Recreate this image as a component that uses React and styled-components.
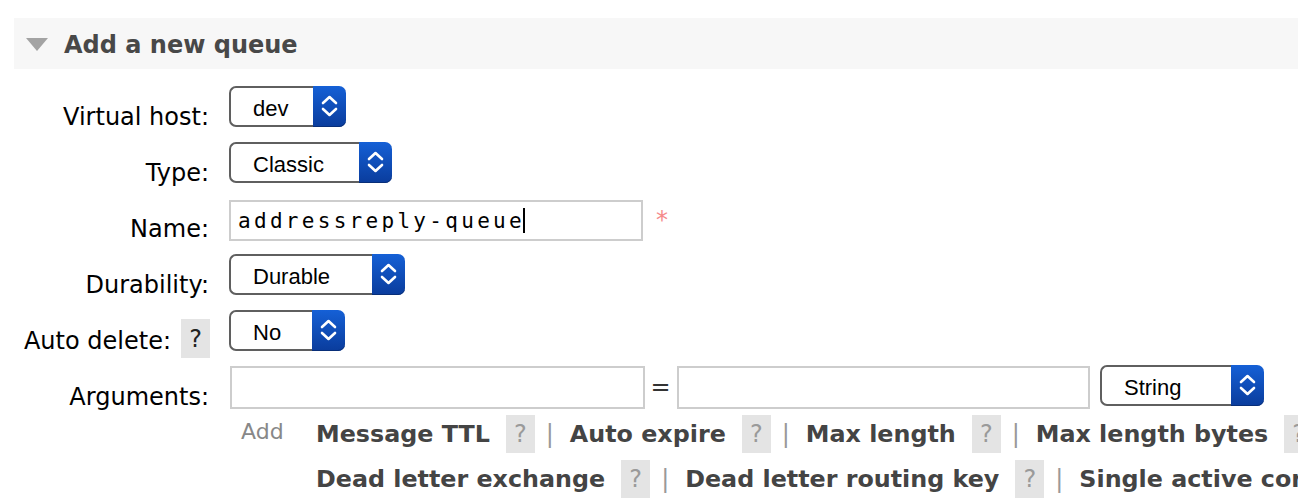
import React from "react";
import styled, { createGlobalStyle } from "styled-components";

const GlobalStyle = createGlobalStyle`
  html, body {
    margin: 0;
    padding: 0;
    background: #fff;
    overflow: hidden;
  }
  body {
    font-family: "DejaVu Sans", Verdana, sans-serif;
    color: #000;
  }
`;

const selects = {
  vhost: { value: "dev", width: 117 },
  type: { value: "Classic", width: 163 },
  durability: { value: "Durable", width: 176 },
  autoDelete: { value: "No", width: 116 },
  argType: { value: "String", width: 164 },
};

const helpLines = [
  ["Message TTL", "Auto expire", "Max length", "Max length bytes"],
  ["Dead letter exchange", "Dead letter routing key", "Single active consumer"],
];

const Chevrons = () => (
  <svg width="33" height="41" viewBox="0 0 33 41">
    <path
      d="M10 17 L16.5 11 L23 17 M10 23 L16.5 29 L23 23"
      fill="none"
      stroke="#fff"
      strokeWidth="2.6"
      strokeLinecap="round"
      strokeLinejoin="round"
    />
  </svg>
);

const SelectBox = ({ value, width }) => (
  <Select $width={width}>
    <SelectValue>{value}</SelectValue>
    <SelectArrows>
      <Chevrons />
    </SelectArrows>
  </Select>
);

const App = () => {
  return (
    <>
      <GlobalStyle />
      <Page>
        <SectionHeader>
          <Toggle />
          <Title>Add a new queue</Title>
        </SectionHeader>

        <Form>
          <Row>
            <Label>
              <LabelText>Virtual host:</LabelText>
            </Label>
            <Controls>
              <SelectBox {...selects.vhost} />
            </Controls>
          </Row>

          <Row>
            <Label>
              <LabelText>Type:</LabelText>
            </Label>
            <Controls>
              <SelectBox {...selects.type} />
            </Controls>
          </Row>

          <Row>
            <Label>
              <LabelText>Name:</LabelText>
            </Label>
            <Controls>
              <TextField $width={414}>
                addressreply-queue
                <Caret />
              </TextField>
              <Required>*</Required>
            </Controls>
          </Row>

          <Row>
            <Label>
              <LabelText>Durability:</LabelText>
            </Label>
            <Controls>
              <SelectBox {...selects.durability} />
            </Controls>
          </Row>

          <Row>
            <Label>
              <LabelText>Auto delete:</LabelText>
              <LabelHelp>?</LabelHelp>
            </Label>
            <Controls>
              <SelectBox {...selects.autoDelete} />
            </Controls>
          </Row>

          <Row $compact>
            <Label>
              <LabelText>Arguments:</LabelText>
            </Label>
            <Controls>
              <ArgField $width={415} />
              <Equals>=</Equals>
              <ArgField $width={413} />
              <ArgType>
                <SelectBox {...selects.argType} />
              </ArgType>
            </Controls>
          </Row>

          <HelpArea>
            <AddLink>Add</AddLink>
            <HelpLines>
              {helpLines.map((line, i) => (
                <HelpLine key={i}>
                  {line.map((name, j) => (
                    <React.Fragment key={name}>
                      <ArgLink>{name}</ArgLink>
                      <HelpBox>?</HelpBox>
                      {j < line.length - 1 || i === 0 ? <Pipe>|</Pipe> : null}
                    </React.Fragment>
                  ))}
                </HelpLine>
              ))}
            </HelpLines>
          </HelpArea>
        </Form>
      </Page>
    </>
  );
};

// Styled Components
const Page = styled.div`
  padding: 18px 0 0 14px;
  width: 1284px;
`;

const SectionHeader = styled.div`
  height: 51px;
  background: #f7f7f7;
  display: flex;
  align-items: center;
  padding-left: 12px;
  gap: 16px;
`;

const Toggle = styled.span`
  width: 0;
  height: 0;
  border-left: 11px solid transparent;
  border-right: 11px solid transparent;
  border-top: 13px solid #a3a3a3;
  margin-top: 2px;
`;

const Title = styled.h2`
  margin: 2px 0 0;
  font-size: 24px;
  font-weight: bold;
  color: #484848;
  line-height: 28px;
`;

const Form = styled.div`
  padding-top: 17px;
`;

const Row = styled.div`
  display: grid;
  grid-template-columns: 196px auto;
  column-gap: 19px;
  height: ${({ $compact }) => ($compact ? "49px" : "56px")};
`;

const Label = styled.div`
  display: flex;
  justify-content: flex-end;
  align-items: flex-start;
  white-space: nowrap;
`;

const LabelText = styled.span`
  padding-top: 17px;
  margin-right: 1px;
  font-size: 24px;
  line-height: 28px;
`;

const LabelHelp = styled.span`
  width: 29px;
  height: 39px;
  margin: 9px 0 0 9px;
  background: #e4e4e4;
  font-size: 24px;
  line-height: 41px;
  text-align: center;
  color: #222;
`;

const Controls = styled.div`
  display: flex;
  align-items: flex-start;
`;

const Select = styled.div`
  width: ${({ $width }) => $width}px;
  height: 41px;
  display: flex;
  flex-shrink: 0;
`;

const SelectValue = styled.div`
  flex: 1;
  box-sizing: border-box;
  border: 2px solid #5f5f5f;
  border-right: none;
  border-radius: 7px 0 0 7px;
  background: #fff;
  padding: 2px 0 0 22px;
  font-family: "Liberation Sans", Arial, sans-serif;
  font-size: 22px;
  line-height: 37px;
  color: #000;
`;

const SelectArrows = styled.div`
  width: 33px;
  height: 41px;
  border-radius: 0 7px 7px 0;
  background: linear-gradient(#1560d6, #0a3c9c);
  box-shadow: inset 0 -1px 0 #082e78;
  display: flex;
`;

const TextField = styled.div`
  width: ${({ $width }) => $width}px;
  height: 41px;
  margin-top: 2px;
  box-sizing: border-box;
  border: 2px solid #cdcdcd;
  padding-left: 7px;
  display: flex;
  align-items: center;
  font-family: "DejaVu Sans Mono", monospace;
  font-size: 21px;
  letter-spacing: 3.3px;
  color: #000;
`;

const Caret = styled.span`
  width: 2px;
  height: 25px;
  margin-left: -2px;
  background: #000;
`;

const Required = styled.span`
  margin-left: 13px;
  padding-top: 8px;
  font-size: 24px;
  line-height: 28px;
  color: #f58a8a;
`;

const ArgField = styled.div`
  width: ${({ $width }) => $width}px;
  height: 43px;
  margin-left: 1px;
  flex-shrink: 0;
  box-sizing: border-box;
  border: 2px solid #cdcdcd;
  background: #fff;
`;

const Equals = styled.span`
  width: 31px;
  text-align: center;
  font-size: 24px;
  line-height: 43px;
  color: #333;
`;

const ArgType = styled.div`
  margin: -1px 0 0 10px;
`;

const HelpArea = styled.div`
  display: flex;
  align-items: flex-start;
  padding-left: 227px;
`;

const AddLink = styled.span`
  flex: 0 0 75px;
  padding-top: 3px;
  font-size: 22px;
  line-height: 28px;
  color: #888;
`;

const HelpLines = styled.div`
  display: flex;
  flex-direction: column;
  flex-shrink: 0;
`;

const HelpLine = styled.div`
  display: flex;
  align-items: flex-start;
  height: 45px;
  white-space: nowrap;
`;

const ArgLink = styled.span`
  font-size: 23.8px;
  font-weight: bold;
  line-height: 38px;
  color: #444;
`;

const HelpBox = styled.span`
  width: 29px;
  height: 38px;
  margin-left: 16px;
  background: #e4e4e4;
  font-size: 24px;
  line-height: 38px;
  text-align: center;
  color: #9a9a9a;
`;

const Pipe = styled.span`
  width: 8px;
  margin: 0 16px 0 11px;
  font-size: 24px;
  line-height: 38px;
  color: #999;
`;

export default App;
